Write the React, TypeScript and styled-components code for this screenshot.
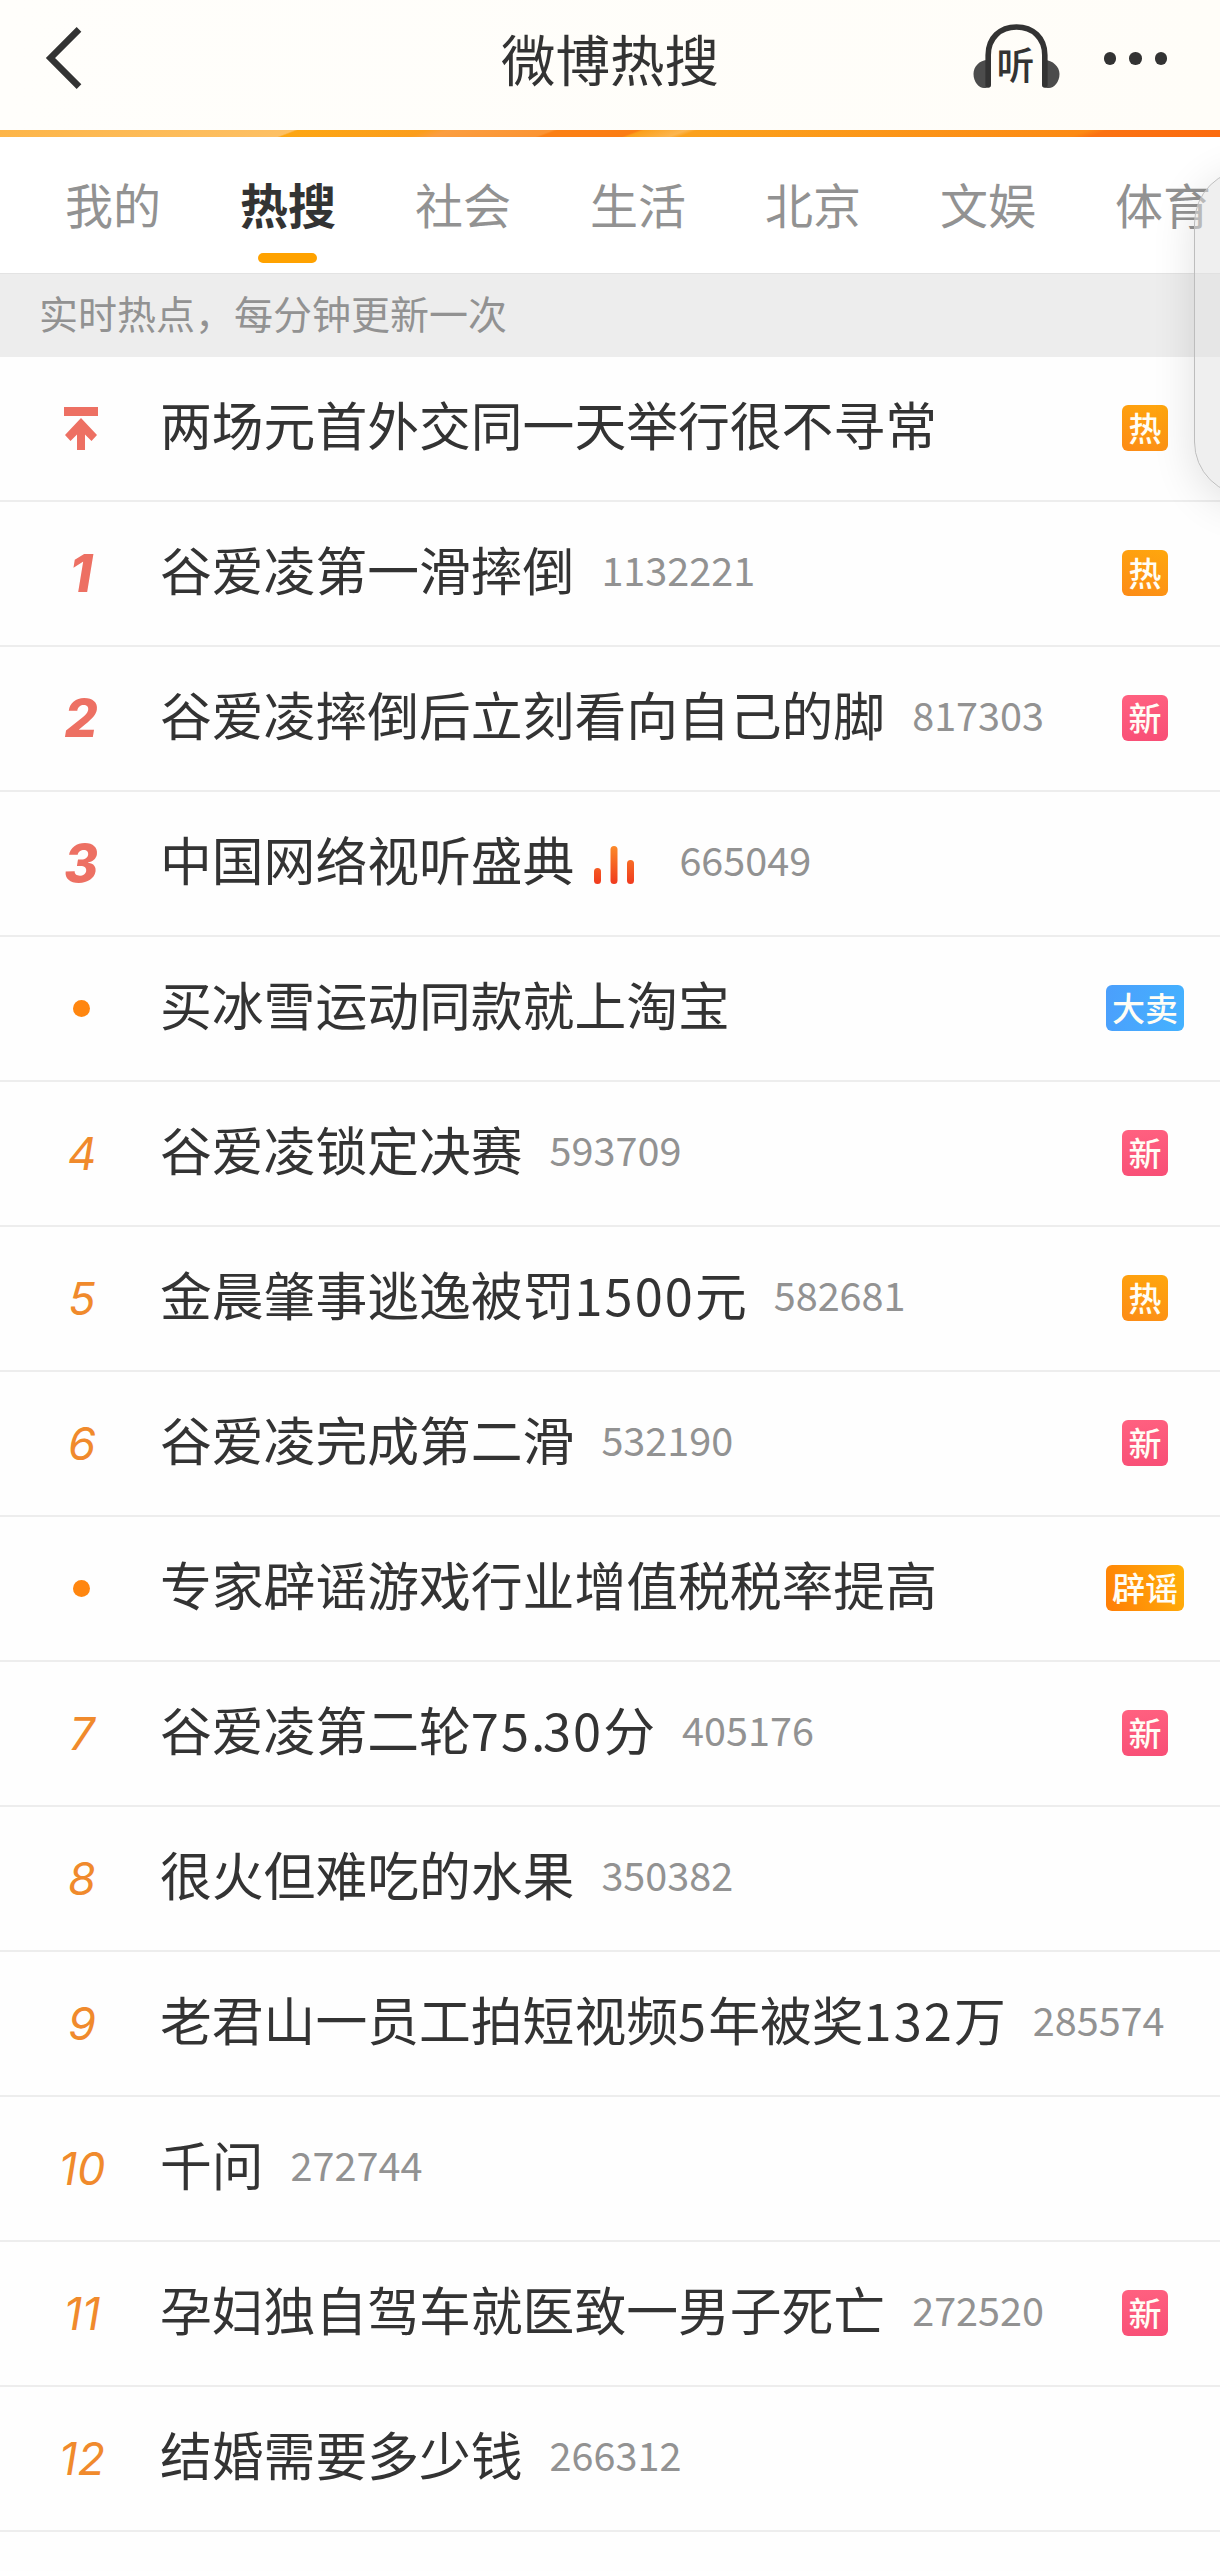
import React from "react";
import styled, { createGlobalStyle } from "styled-components";

const cjk = `"Noto Sans CJK SC", sans-serif`;

const GlobalStyle = createGlobalStyle`
  html, body { margin: 0; padding: 0; background: #fefefe; }
  body { width: 1220px; font-family: ${cjk}; color: #333; overflow: hidden; }
  * { box-sizing: border-box; }
`;

const Screen = styled.main`
  position: relative;
  width: 1220px;
  height: 2571px;
  overflow: hidden;
  background: #fefefe;
  display: flex;
  flex-direction: column;
`;

const Header = styled.header`
  height: 130px;
  flex: none;
  display: grid;
  grid-template-columns: 1fr auto 1fr;
  align-items: start;
  background: linear-gradient(90deg, #fffefb, #fffdf8);
`;

const BackButton = styled.span`
  padding: 24px 0 0 42px;
  svg { display: block; }
`;

const Title = styled.h1`
  margin: 0;
  padding-top: 18px;
  font-size: 54.5px;
  line-height: 80px;
  font-weight: 400;
`;

const Actions = styled.div`
  display: flex;
  justify-content: flex-end;
  align-items: flex-start;
  gap: 44px;
  padding: 22px 53px 0 0;
`;

const Listen = styled.span`
  position: relative;
  width: 88px;
  height: 68px;
  svg { display: block; }
`;

const ListenLabel = styled.span`
  position: absolute;
  left: 0;
  right: 0;
  top: 21px;
  text-align: center;
  font-size: 38px;
  line-height: 40px;
  font-weight: 500;
`;

const Dots = styled.span`
  display: flex;
  gap: 13px;
  padding-top: 30px;
  i { width: 12.5px; height: 12.5px; border-radius: 50%; background: #333; }
`;

const AccentBar = styled.div`
  height: 7px;
  flex: none;
  background: linear-gradient(159deg, #fdb548 0, #fdc064 105.500px, #fda613 107px, #fb9d1c 153px,
    #fb9e40 161px, #fb9433 198px, #fb8014 200px, #fb7d14 229px, #fba01c 231px, #fcb650 246px,
    #fba11c 250px, #fc8a14 390px, #fb7212 397px, #fb6c10 440px);
`;

const Tabs = styled.nav`
  height: 137px;
  flex: none;
  display: flex;
  gap: 80px;
  padding-left: 65px;
  background: #fff;
  border-bottom: 1px solid #e3e3e3;
`;

const Tab = styled.span<{ $active?: boolean }>`
  flex: none;
  width: 96px;
  margin-right: -1px;
  display: flex;
  flex-direction: column;
  align-items: center;
  padding-top: 31px;
  font-size: 48px;
  line-height: 70px;
  white-space: nowrap;
  color: ${(p) => (p.$active ? "#333" : "#929292")};
  font-weight: ${(p) => (p.$active ? 700 : 400)};
  &::after {
    content: "";
    margin: 15px 1px 0 0;
    width: 59px;
    height: 10px;
    border-radius: 5px;
    background: ${(p) => (p.$active ? "#ffa200" : "transparent")};
  }
`;

const Notice = styled.p`
  height: 83px;
  flex: none;
  margin: 0;
  padding-left: 39px;
  background: #ededed;
  color: #929292;
  font-size: 39px;
  line-height: 77px;
`;

const List = styled.ol`
  margin: 0;
  padding: 0;
  list-style: none;
`;

const Row = styled.li`
  height: 145px;
  display: flex;
  align-items: center;
  border-bottom: 2px solid #ededed;
`;

const Rank = styled.span<{ $top?: boolean }>`
  width: 160px;
  flex: none;
  display: flex;
  justify-content: center;
  padding-left: 2px;
  text-indent: ${(p) => (p.$top ? "0" : "2px")};
  font-family: Inter, "Liberation Sans", sans-serif;
  font-style: italic;
  font-size: ${(p) => (p.$top ? "52px" : "45px")};
  font-weight: ${(p) => (p.$top ? 800 : 400)};
  line-height: 60px;
  color: ${(p) => (p.$top ? "#ed7063" : "#f08a2c")};
`;

const Dot = styled.i`
  width: 17px;
  height: 17px;
  border-radius: 50%;
  background: #ff860f;
`;

const Topic = styled.span`
  font-size: 51.8px;
  line-height: 74px;
  white-space: nowrap;
  margin-top: -10px;
`;

const Digits = styled.span`
  font-size: 50.5px;
  letter-spacing: 2.1px;
`;

const Point = styled.span`
  letter-spacing: -2.5px;
`;

const Count = styled.span`
  margin: -9px 0 0 27px;
  font-size: 39.6px;
  line-height: 60px;
  color: #929292;
`;

const Chart = styled.svg`
  flex: none;
  margin: 2px 17px 0 20px;
`;

const BadgeSlot = styled.span`
  width: 150px;
  margin: -1px 0 0 auto;
  display: flex;
  justify-content: center;
`;

type Kind = "hot" | "new" | "sale" | "rumor";

const fills: Record<Kind, string> = {
  hot: "linear-gradient(200deg, #ffa70d, #fc8b17)",
  new: "linear-gradient(170deg, #ff6180, #f84e76)",
  sale: "linear-gradient(100deg, #4b9ffc, #44b2ff)",
  rumor: "linear-gradient(70deg, #ff7d06, #ffb20a)",
};

const Badge = styled.span<{ $kind: Kind }>`
  height: 46px;
  min-width: 46px;
  padding: 0 6px;
  border-radius: 6px;
  background: ${(p) => fills[p.$kind]};
  color: #fffdf5;
  font-size: 33px;
  line-height: 44px;
  font-weight: 500;
  text-align: center;
`;

const SidePanel = styled.aside`
  position: absolute;
  left: 1194px;
  top: 169px;
  width: 120px;
  height: 327px;
  border: 1px solid #bdbdbd;
  border-radius: 54px;
  background: rgba(223, 223, 223, 0.5);
  box-shadow: 0 8px 44px rgba(0, 0, 0, 0.12);
`;

type Item = { rank: string; text: string; count?: string; badge?: [Kind, string]; chart?: boolean };

const hot: [Kind, string] = ["hot", "热"];
const fresh: [Kind, string] = ["new", "新"];

const items: Item[] = [
  { rank: "top", text: "两场元首外交同一天举行很不寻常", badge: hot },
  { rank: "1", text: "谷爱凌第一滑摔倒", count: "1132221", badge: hot },
  { rank: "2", text: "谷爱凌摔倒后立刻看向自己的脚", count: "817303", badge: fresh },
  { rank: "3", text: "中国网络视听盛典", count: "665049", chart: true },
  { rank: "dot", text: "买冰雪运动同款就上淘宝", badge: ["sale", "大卖"] },
  { rank: "4", text: "谷爱凌锁定决赛", count: "593709", badge: fresh },
  { rank: "5", text: "金晨肇事逃逸被罚1500元", count: "582681", badge: hot },
  { rank: "6", text: "谷爱凌完成第二滑", count: "532190", badge: fresh },
  { rank: "dot", text: "专家辟谣游戏行业增值税税率提高", badge: ["rumor", "辟谣"] },
  { rank: "7", text: "谷爱凌第二轮75.30分", count: "405176", badge: fresh },
  { rank: "8", text: "很火但难吃的水果", count: "350382" },
  { rank: "9", text: "老君山一员工拍短视频5年被奖132万", count: "285574" },
  { rank: "10", text: "千问", count: "272744" },
  { rank: "11", text: "孕妇独自驾车就医致一男子死亡", count: "272520", badge: fresh },
  { rank: "12", text: "结婚需要多少钱", count: "266312" },
];

const tabs = ["我的", "热搜", "社会", "生活", "北京", "文娱", "体育"];

function RankMark({ rank }: { rank: string }) {
  if (rank === "dot") return <Rank><Dot /></Rank>;
  if (rank === "top") {
    return (
      <Rank>
        <svg width="36" height="45" viewBox="0 0 36 45">
          <path d="M1 1H35V10H1Z M18 12L34 29L28.5 35L22 28.5V44H14V28.5L7.5 35L2 29Z" fill="#ed7063" />
        </svg>
      </Rank>
    );
  }
  return <Rank $top={Number(rank) <= 3}>{rank}</Rank>;
}

function TopicText({ text }: { text: string }) {
  return (
    <Topic>
      {text.split(/(\d+|\.)/).map((part, i) => {
        if (part === ".") return <Point key={i}>{part}</Point>;
        return /^\d+$/.test(part) ? <Digits key={i}>{part}</Digits> : part;
      })}
    </Topic>
  );
}

export default function App() {
  return (
    <>
      <GlobalStyle />
      <Screen>
        <Header>
          <BackButton>
            <svg width="44" height="68" viewBox="0 0 44 68">
              <path d="M37 5.3L8.5 34L37 62.7" fill="none" stroke="#333" strokeWidth="6.6" />
            </svg>
          </BackButton>
          <Title>微博热搜</Title>
          <Actions>
            <Listen>
              <svg width="88" height="68" viewBox="0 0 88 68">
                <path d="M16 38C7 38 1.500 45 1.500 52C1.500 60 7 66 12 66C16 66 18 64 18 60Z M72 38C81 38 87.500 45 87.500 52C87.500 60 82 66 77 66C73 66 70 64 70 60Z" fill="#4c4c4c" />
                <path d="M16.200 63V33C16.200 16 28 5 44.500 5C61 5 72.800 16 72.800 33V63" fill="none" stroke="#333" strokeWidth="5.600" strokeLinecap="round" />
              </svg>
              <ListenLabel>听</ListenLabel>
            </Listen>
            <Dots><i /><i /><i /></Dots>
          </Actions>
        </Header>
        <AccentBar />
        <Tabs>
          {tabs.map((t) => <Tab key={t} $active={t === "热搜"}>{t}</Tab>)}
        </Tabs>
        <Notice>实时热点，每分钟更新一次</Notice>
        <List>
          {items.map((it) => (
            <Row key={it.text}>
              <RankMark rank={it.rank} />
              <TopicText text={it.text} />
              {it.chart && (
                <Chart width="41" height="38" viewBox="0 0 41 38">
                  <defs>
                    <linearGradient id="heat" x1="0" y1="0" x2="0" y2="38" gradientUnits="userSpaceOnUse">
                      <stop offset="0" stopColor="#fb8a2a" />
                      <stop offset="1" stopColor="#f03a1e" />
                    </linearGradient>
                  </defs>
                  <g fill="url(#heat)">
                    <rect x="0" y="22" width="7" height="16" rx="3.500" />
                    <rect x="16.500" y="0" width="7" height="38" rx="3.500" />
                    <rect x="33" y="14" width="7" height="24" rx="3.500" />
                  </g>
                </Chart>
              )}
              {it.count && <Count>{it.count}</Count>}
              {it.badge && <BadgeSlot><Badge $kind={it.badge[0]}>{it.badge[1]}</Badge></BadgeSlot>}
            </Row>
          ))}
        </List>
        <SidePanel />
      </Screen>
    </>
  );
}
